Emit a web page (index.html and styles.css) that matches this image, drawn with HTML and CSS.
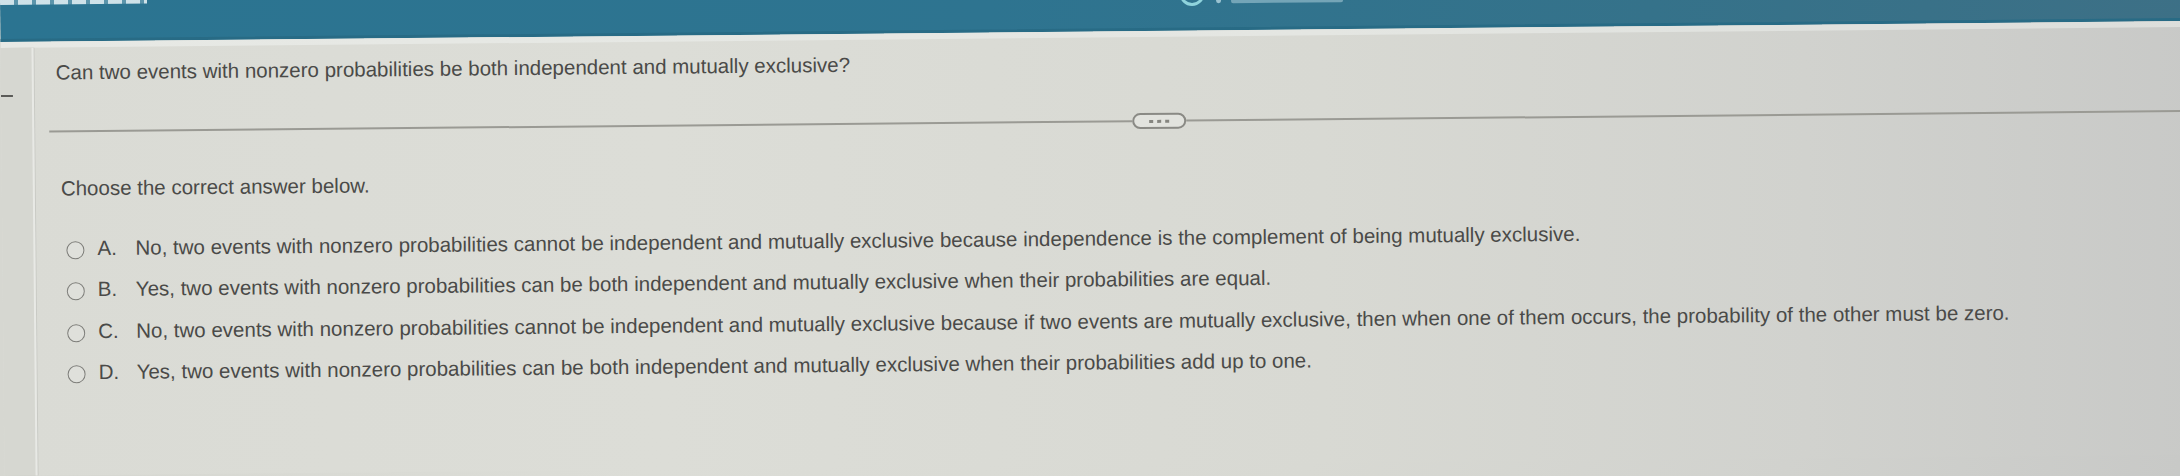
FILE: index.html
```html
<!DOCTYPE html>
<html lang="en">
<head>
<meta charset="utf-8">
<title>Question</title>
<link rel="stylesheet" href="styles.css">
</head>
<body>
<div class="page">
  <header class="topbar">
    <div class="crumb"></div>
    <div class="status">
      <svg class="ring" width="28" height="18" viewBox="0 0 28 18" aria-hidden="true">
        <circle cx="14" cy="5" r="11" fill="none" stroke="#8fd3dc" stroke-width="3"/>
      </svg>
      <span class="dot"></span>
      <span class="stub"></span>
    </div>
  </header>
  <div class="strip"></div>
  <div class="main">
    <aside class="side"><span class="handle"></span></aside>
    <section class="content">
      <p class="question">Can two events with nonzero probabilities be both independent and mutually exclusive?</p>
      <div class="divider">
        <span class="rule rule-left"></span>
        <span class="more"><i></i><i></i><i></i></span>
        <span class="rule rule-right"></span>
      </div>
      <p class="prompt">Choose the correct answer below.</p>
      <ul class="options">
        <li class="option"><span class="radio"></span><span class="letter">A.</span><span class="text">No, two events with nonzero probabilities cannot be independent and mutually exclusive because independence is the complement of being mutually exclusive.</span></li>
        <li class="option"><span class="radio"></span><span class="letter">B.</span><span class="text">Yes, two events with nonzero probabilities can be both independent and mutually exclusive when their probabilities are equal.</span></li>
        <li class="option"><span class="radio"></span><span class="letter">C.</span><span class="text">No, two events with nonzero probabilities cannot be independent and mutually exclusive because if two events are mutually exclusive, then when one of them occurs, the probability of the other must be zero.</span></li>
        <li class="option"><span class="radio"></span><span class="letter">D.</span><span class="text">Yes, two events with nonzero probabilities can be both independent and mutually exclusive when their probabilities add up to one.</span></li>
      </ul>
    </section>
  </div>
</div>
</body>
</html>
```

FILE: styles.css
```css
html, body {
  margin: 0;
  padding: 0;
  overflow: hidden;
}

html {
  background: linear-gradient(90deg, #d6d7d1 0%, #dcddd7 30%, #d8d9d3 60%, #d1d2ce 82%, #c8c9c7 100%);
}

body {
  width: 2180px;
  height: 476px;
}

.page {
  width: 2200px;
  height: 476px;
  overflow: hidden;
  transform: rotate(-0.55deg);
  transform-origin: 0 0;
  font-family: "Liberation Sans", Arial, sans-serif;
  color: #4a4a48;
  background: linear-gradient(90deg, #dadbd5 0%, #dcddd7 30%, #d8d9d3 60%, #d1d2ce 82%, #c8c9c7 100%);
}

/* top bar */
.topbar {
  height: 42px;
  display: flex;
  align-items: flex-start;
  background: linear-gradient(90deg, #2b7491 0%, #2e7490 45%, #35728a 75%, #3d7086 100%);
  box-shadow: inset 0 -3px 0 #286b85;
}

.crumb {
  width: 147px;
  height: 5px;
  background: repeating-linear-gradient(90deg, rgba(235, 245, 248, 0.85) 0 14px, rgba(235, 245, 248, 0.25) 14px 18px);
}

.status {
  margin-left: 1031px;
  display: flex;
  align-items: flex-start;
  gap: 10px;
}

.ring {
  display: block;
}

.dot {
  width: 5px;
  height: 5px;
  margin-top: 10px;
  border-radius: 50%;
  background: rgba(200, 230, 238, 0.7);
}

.stub {
  width: 112px;
  height: 5px;
  margin-top: 10px;
  border-radius: 2px;
  background: rgba(200, 226, 234, 0.45);
}

.strip {
  height: 6px;
  background: linear-gradient(90deg, #e7e9e5, #e4e6e2 60%, #dcdedb);
}

/* main */
.main {
  display: flex;
  height: 428px;
}

.side {
  width: 33px;
  flex: none;
  padding-top: 47px;
  box-sizing: border-box;
  background: #d6d7d1;
  border-right: 2px solid #e8e9e5;
  box-shadow: 1px 0 0 #c9cac5;
}

.handle {
  display: block;
  width: 12px;
  height: 2px;
  background: #5b5b58;
}

.content {
  flex: 1;
  padding: 13px 0 0 22px;
  font-size: 20.5px;
  line-height: 24px;
}

.question {
  margin: 0;
}

.divider {
  margin: 39px 0 0 -7px;
  height: 16px;
  display: flex;
  align-items: center;
}

.rule {
  height: 2px;
  background: #9a9a94;
}

.rule-left {
  width: 1083px;
  flex: none;
}

.rule-right {
  flex: 1;
}

.more {
  width: 54px;
  height: 16px;
  box-sizing: border-box;
  border: 2px solid #8a8a85;
  border-radius: 8px;
  background: #e2e3de;
  display: flex;
  align-items: center;
  justify-content: center;
  gap: 4px;
}

.more i {
  width: 4px;
  height: 3px;
  background: #85857f;
}

.prompt {
  margin: 37px 0 0 4px;
}

.options {
  list-style: none;
  margin: 27px 0 0 0;
  padding: 0 0 0 9px;
}

.option {
  height: 41.5px;
  display: flex;
  align-items: center;
  white-space: nowrap;
}

.radio {
  width: 18px;
  height: 18px;
  flex: none;
  box-sizing: border-box;
  margin: 4px 13px 0 0;
  border: 1.5px solid #7e7e7a;
  border-radius: 50%;
  background: #dfe0db;
}

.letter {
  width: 38px;
  flex: none;
}
```
